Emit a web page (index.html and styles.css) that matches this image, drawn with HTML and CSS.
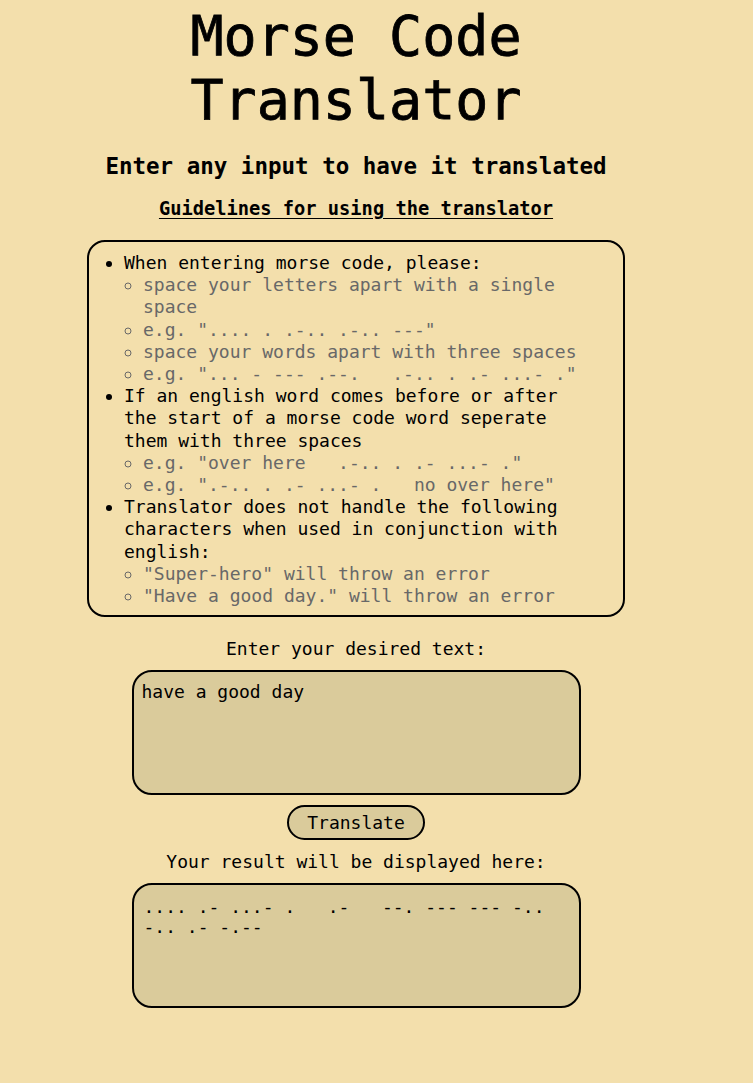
FILE: index.html
```html
<!DOCTYPE html>
<html lang="en">
<head>
<meta charset="utf-8">
<title>Morse Code Translator</title>
<link rel="stylesheet" href="styles.css">
</head>
<body>
<main class="page">
  <h1 class="title">Morse Code Translator</h1>
  <h2 class="subtitle">Enter any input to have it translated</h2>
  <h3 class="guide-title">Guidelines for using the translator</h3>
  <div class="guide-box">
    <ul class="rules">
      <li>When entering morse code, please:
        <ul class="sub">
          <li>space your letters apart with a single space</li>
          <li>e.g. ".... . .-.. .-.. ---"</li>
          <li>space your words apart with three spaces</li>
          <li>e.g. "... - --- .--.   .-.. . .- ...- ."</li>
        </ul>
      </li>
      <li>If an english word comes before or after the start of a morse code word seperate them with three spaces
        <ul class="sub">
          <li>e.g. "over here   .-.. . .- ...- ."</li>
          <li>e.g. ".-.. . .- ...- .   no over here"</li>
        </ul>
      </li>
      <li>Translator does not handle the following characters when used in conjunction with english:
        <ul class="sub">
          <li>"Super-hero" will throw an error</li>
          <li>"Have a good day." will throw an error</li>
        </ul>
      </li>
    </ul>
  </div>
  <label class="field-label" for="input">Enter your desired text:</label>
  <textarea id="input" class="text-box">have a good day</textarea>
  <button class="translate-btn" type="button">Translate</button>
  <p class="field-label result-label">Your result will be displayed here:</p>
  <div class="text-box output">.... .- ...- .   .-   --. --- --- -..   -.. .- -.--</div>
</main>
</body>
</html>
```

FILE: styles.css
```css
html, body {
  margin: 0;
  padding: 0;
  background: #f3dfac;
}

body {
  font-family: "DejaVu Sans Mono", "Liberation Mono", monospace;
  color: #000;
}

.page {
  width: 712px;
  display: flex;
  flex-direction: column;
  align-items: center;
  text-align: center;
}

.title {
  margin: 4px 0 0;
  width: 420px;
  font-size: 55px;
  line-height: 64px;
  font-weight: normal;
  -webkit-text-stroke: 0.8px #000;
}

.subtitle {
  margin: 21px 0 0;
  font-size: 22.5px;
  line-height: 26px;
  font-weight: bold;
}

.guide-title {
  margin: 19px 0 0;
  font-size: 18.72px;
  line-height: 22px;
  font-weight: bold;
  text-decoration: underline;
  text-underline-offset: 3px;
}

.guide-box {
  margin-top: 20px;
  width: 538px;
  box-sizing: border-box;
  border: 2px solid #000;
  border-radius: 18px;
  padding: 10px 40px 8px 0;
  text-align: left;
  font-size: 18px;
  line-height: 22.2px;
}

.rules {
  margin: 0;
  padding-left: 35px;
  list-style: disc;
}

.sub {
  margin: 0;
  padding-left: 19px;
  list-style: circle;
  color: #686868;
}

.sub li {
  white-space: pre-wrap;
}

.field-label {
  display: block;
  margin: 21px 0 0;
  font-size: 18px;
  line-height: 22px;
}

.text-box {
  margin-top: 10px;
  width: 449px;
  height: 125px;
  box-sizing: border-box;
  border: 2px solid #000;
  border-radius: 20px;
  background: #dacb9b;
  padding: 9px 8px 8px 8px;
  font-family: "DejaVu Sans Mono", "Liberation Mono", monospace;
  font-size: 18px;
  line-height: 22px;
  color: #000;
  text-align: left;
  resize: none;
  outline: none;
}

.translate-btn {
  margin-top: 10px;
  height: 35px;
  box-sizing: border-box;
  padding: 0 18px;
  border: 2px solid #000;
  border-radius: 18px;
  background: #dacb9b;
  font-family: "DejaVu Sans Mono", "Liberation Mono", monospace;
  font-size: 18px;
  line-height: 22px;
  color: #000;
}

.result-label {
  margin-top: 11px;
}

.output {
  white-space: pre-wrap;
  line-height: 20px;
  padding: 12px 8px 8px 10px;
}
```
